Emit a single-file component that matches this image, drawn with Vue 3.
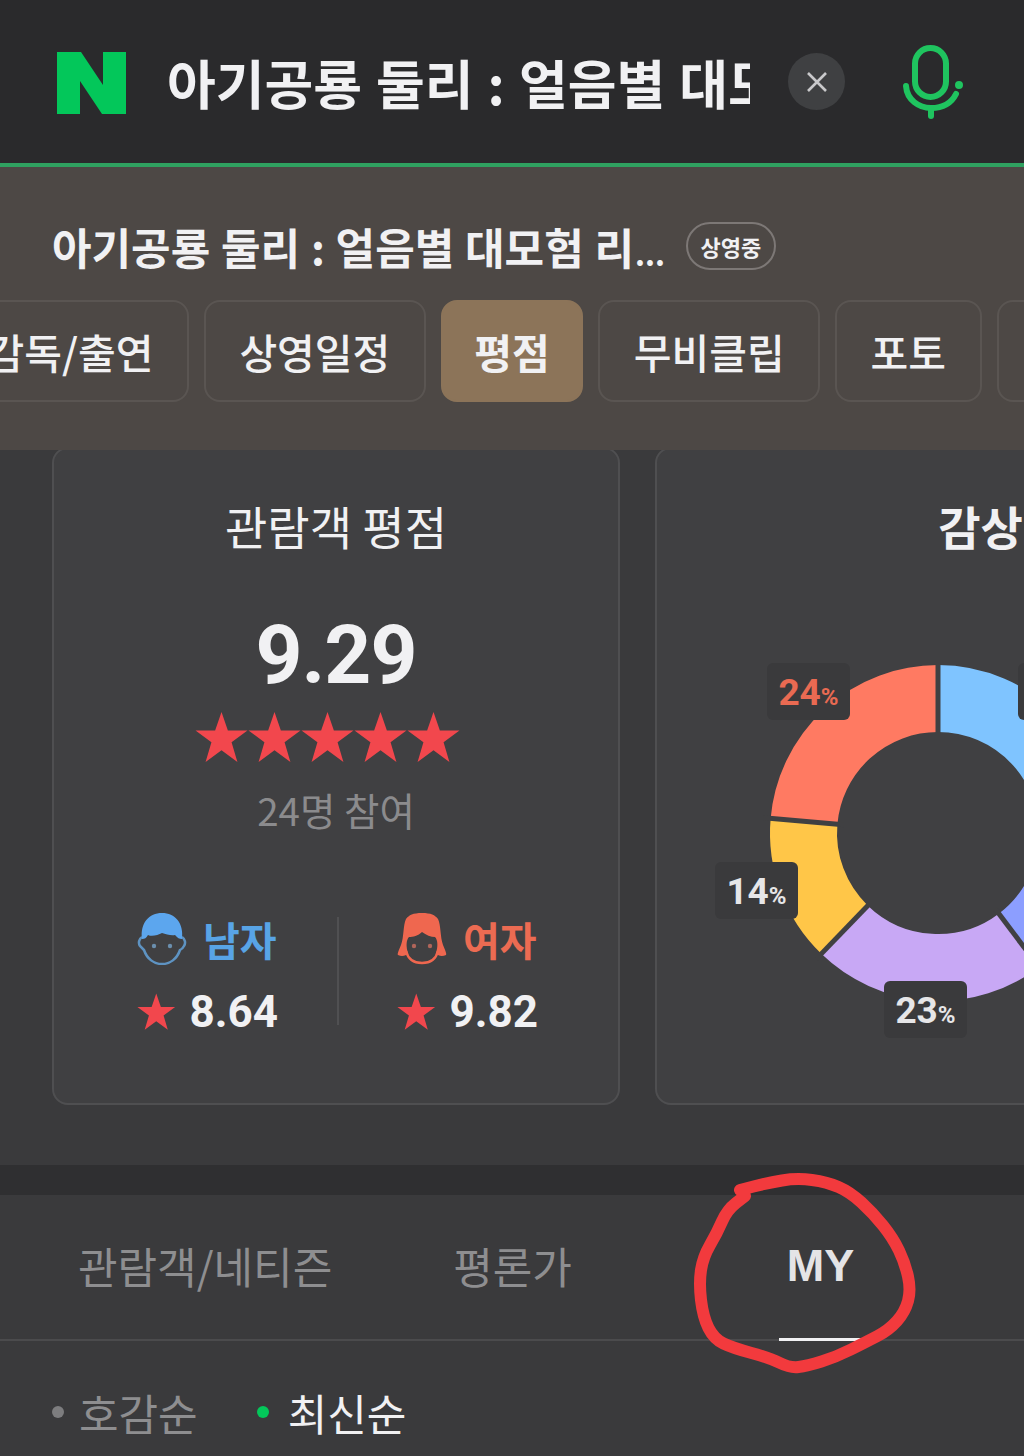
<script setup>
const chips = [
  { label: '감독/출연' },
  { label: '상영일정' },
  { label: '평점', active: true },
  { label: '무비클립' },
  { label: '포토' },
  { label: '리뷰' },
]

// 도넛 각 구간, 12시 방향부터 시계방향 (deg)
const cx = 200
const cy = 200
const r = 134.5
const segments = [
  { from: 0, to: 97, color: '#7fc4ff' },
  { from: 97, to: 143, color: '#8c9eff' },
  { from: 143, to: 224, color: '#c8a8f5' },
  { from: 224, to: 275, color: '#ffc648' },
  { from: 275, to: 360, color: '#ff7a62' },
]
const point = (deg, radius) => {
  const a = ((deg - 90) * Math.PI) / 180
  return [cx + radius * Math.cos(a), cy + radius * Math.sin(a)]
}
const arc = (s) => {
  const [x1, y1] = point(s.from, r)
  const [x2, y2] = point(s.to, r)
  return `M${x1} ${y1}A${r} ${r} 0 ${s.to - s.from > 180 ? 1 : 0} 1 ${x2} ${y2}`
}
const gapLine = (s) => {
  const [x1, y1] = point(s.from, 95)
  const [x2, y2] = point(s.from, 175)
  return `M${x1} ${y1}L${x2} ${y2}`
}

const labels = [
  { text: '24', cls: 'l24', red: true },
  { text: '14', cls: 'l14' },
  { text: '23', cls: 'l23' },
  { text: '27', cls: 'l27' },
]

// 빨간 손글씨 동그라미
const scribblePts = [
  [740, 1190], [767, 1183], [797, 1178], [827, 1182], [850, 1192], [873, 1213],
  [893, 1238], [905, 1263], [911, 1290], [905, 1312], [889, 1330], [866, 1342],
  [836, 1357], [807, 1366], [790, 1368], [770, 1358], [733, 1348], [714, 1339],
  [703, 1317], [699, 1283], [703, 1257], [717, 1233], [727, 1210], [745, 1196],
]
const scribble = scribblePts.reduce((d, p, i) => {
  if (i === 0) return `M${p[0]} ${p[1]}`
  const prev = scribblePts[i - 1]
  return `${d}Q${prev[0]} ${prev[1]} ${(prev[0] + p[0]) / 2} ${(prev[1] + p[1]) / 2}`
}, '') + 'L745 1196'

const starPath = 'M25 1l6 17.500h18.500L34.500 29.500 40 48 25 37 10 48l5.500-18.500L.5 18.500H19z'
</script>

<template>
  <div class="page">
    <header class="search">
      <svg class="logo" viewBox="0 0 69 62"><path d="M0 0H24L46 33V0H69V62H45L23 29V62H0Z" fill="#03c75a" /></svg>
      <div class="query">아기공룡 둘리 : 얼음별 대모험 리마스터링</div>
      <button class="clear">
        <svg viewBox="0 0 24 24" width="24" height="24"><path d="M3 3L21 21M21 3L3 21" stroke="#c9c9cb" stroke-width="2.600" /></svg>
      </button>
      <svg class="mic" viewBox="0 0 64 76" fill="none" stroke="#1fc45f" stroke-width="6" stroke-linecap="round">
        <rect x="14" y="4" width="31" height="49" rx="15.500" />
        <path d="M5 42C6 56 18 64 30 64C40 64 50 60 55 50" />
        <path d="M30 64V72" />
        <circle cx="58" cy="41" r="2" fill="#1fc45f" stroke-width="4" />
      </svg>
    </header>

    <section class="movie">
      <div class="movie-head">
        <h1>아기공룡 둘리 : 얼음별 대모험 리<span class="dots">...</span></h1>
        <span class="badge">상영중</span>
      </div>
      <nav class="chips">
        <a v-for="c in chips" :key="c.label" class="chip" :class="{ active: c.active }">{{ c.label }}</a>
      </nav>
    </section>

    <section class="cards">
      <div class="card score-card">
        <h2>관람객 평점</h2>
        <div class="score">9.29</div>
        <div class="stars">
          <svg v-for="n in 5" :key="n" viewBox="0 0 50 50" width="53" height="53"><path :d="starPath" fill="#f2474d" /></svg>
        </div>
        <div class="count">24명 참여</div>
        <div class="gender">
          <div class="col left">
            <div class="who male">
              <svg viewBox="0 0 50 52" width="50" height="52">
                <path d="M5 24C2 26 1 30 3 33C5 35 6 36 7 37C10 46 17 51 25 51C33 51 40 46 43 37C45 36 46 35 47 33C49 30 48 26 45 24" fill="none" stroke="#5e93c2" stroke-width="2.500" />
                <path d="M5 26C3 10 12 0 25 0C38 0 47 10 45 26C42 26 41 25 38 22C34 23 29 21 25 20C21 22 15 24 11 22C9 25 8 26 5 26Z" fill="#5ca6ee" />
                <circle cx="17" cy="33" r="2.200" fill="#6b8fae" />
                <circle cx="33" cy="33" r="2.200" fill="#6b8fae" />
              </svg>
              <span>남자</span>
            </div>
            <div class="rate">
              <svg viewBox="0 0 50 50" width="40" height="40"><path :d="starPath" fill="#f2474d" /></svg>
              <b>8.64</b>
            </div>
          </div>
          <i class="vline"></i>
          <div class="col right">
            <div class="who female">
              <svg viewBox="0 0 50 52" width="50" height="52">
                <path d="M9 38C11 46 17 50 25 50C33 50 39 46 41 38" fill="none" stroke="#ef674f" stroke-width="2.500" />
                <path d="M9 6C12 2 16 0 25 0C34 0 38 2 41 6C44 12 43 24 46 32C48 37 50 41 49 42C45 44 41 43 39 40C41 34 41 27 38 24C34 24 29 22 25 19C21 23 16 24 12 24C9 27 9 34 11 40C9 43 5 44 1 42C0 41 2 37 4 32C7 24 6 12 9 6Z" fill="#ef674f" />
                <circle cx="17" cy="33" r="2.200" fill="#b0655a" />
                <circle cx="33" cy="33" r="2.200" fill="#b0655a" />
              </svg>
              <span>여자</span>
            </div>
            <div class="rate">
              <svg viewBox="0 0 50 50" width="40" height="40"><path :d="starPath" fill="#f2474d" /></svg>
              <b>9.82</b>
            </div>
          </div>
        </div>
      </div>

      <div class="card point-card">
        <h2>감상포인트</h2>
        <div class="donut">
          <svg viewBox="0 0 400 400" width="400" height="400" fill="none">
            <path v-for="s in segments" :key="s.from" :d="arc(s)" :stroke="s.color" stroke-width="67" />
            <path v-for="s in segments" :key="'g' + s.from" :d="gapLine(s)" stroke="#404042" stroke-width="5" />
          </svg>
          <div v-for="l in labels" :key="l.cls" class="pct" :class="[l.cls, { red: l.red }]">{{ l.text }}<small>%</small></div>
        </div>
      </div>
    </section>

    <div class="band"></div>

    <section class="reviews">
      <div class="tabs">
        <a class="tab">관람객/네티즌</a>
        <a class="tab">평론가</a>
        <a class="tab on">MY</a>
      </div>
      <div class="sort">
        <span class="opt">호감순</span>
        <span class="opt sel">최신순</span>
      </div>
    </section>

    <svg class="scribble" viewBox="0 0 1024 1456" width="1024" height="1456" fill="none">
      <path :d="scribble" stroke="#f23a3d" stroke-width="12" stroke-linecap="round" stroke-linejoin="round" />
    </svg>
  </div>
</template>

<style scoped>
.page {
  position: relative;
  width: 1024px;
  height: 1456px;
  overflow: hidden;
  background: #3a3a3c;
  font-family: "Noto Sans CJK KR", "Noto Sans", sans-serif;
  color: #f1f1f3;
}
.search {
  height: 163px;
  box-sizing: border-box;
  padding: 0 0 0 57px;
  display: flex;
  align-items: center;
  background: #2a2a2c;
}
.logo {
  width: 69px;
  height: 62px;
  flex: none;
  margin-top: 2px;
}
.query {
  width: 583px;
  margin-left: 41px;
  flex: none;
  overflow: hidden;
  white-space: nowrap;
  font-size: 53px;
  line-height: 70px;
  font-weight: 700;
  word-spacing: 2px;
}
.clear {
  flex: none;
  width: 57px;
  height: 57px;
  margin-left: 38px;
  padding: 0;
  border: 0;
  border-radius: 50%;
  background: #3f4042;
  display: flex;
  align-items: center;
  justify-content: center;
}
.mic {
  flex: none;
  width: 64px;
  height: 76px;
  margin-left: 56px;
}
.movie {
  position: relative;
  z-index: 2;
  height: 287px;
  box-sizing: border-box;
  border-top: 4px solid #2fa160;
  padding-top: 52px;
  background: #4d4845;
}
.movie-head {
  display: flex;
  align-items: center;
  padding-left: 52px;
  height: 54px;
}
h1 {
  margin: 0;
  font-size: 43px;
  line-height: 54px;
  font-weight: 700;
  white-space: nowrap;
  word-spacing: 1px;
}
.dots {
  font-weight: 400;
  letter-spacing: -2px;
}
.badge {
  margin-left: 22px;
  width: 90px;
  height: 48px;
  box-sizing: border-box;
  border: 2px solid #7d7876;
  border-radius: 24px;
  font-size: 22px;
  line-height: 44px;
  font-weight: 700;
  text-align: center;
}
.chips {
  display: flex;
  gap: 15px;
  margin: 27px 0 0 -49px;
}
.chip {
  flex: none;
  height: 102px;
  box-sizing: border-box;
  padding: 0 33.500px;
  border: 2px solid #5a5552;
  border-radius: 16px;
  font-size: 41px;
  line-height: 98px;
  font-weight: 500;
  white-space: nowrap;
}
.chip.active {
  background: #8c7459;
  border-color: #8c7459;
  font-weight: 700;
  padding: 0 31.500px;
}
.cards {
  display: flex;
  gap: 35px;
  margin-top: -3px;
  padding: 0 0 60px 52px;
  background: #3a3a3c;
}
.card {
  flex: none;
  height: 658px;
  box-sizing: border-box;
  padding-top: 46px;
  border: 2px solid #4f4f51;
  border-radius: 16px;
  background: #404042;
  text-align: center;
}
.score-card {
  width: 568px;
}
.point-card {
  width: 778px;
}
h2 {
  margin: 0;
  font-size: 46px;
  line-height: 60px;
  font-weight: 400;
}
.point-card h2 {
  font-weight: 700;
}
.score {
  margin-top: 50px;
  font-family: Roboto, sans-serif;
  font-size: 82px;
  line-height: 100px;
  font-weight: 700;
  letter-spacing: -1px;
}
.stars {
  display: flex;
  justify-content: center;
  margin: 6px 18px 0 0;
}
.count {
  margin-top: 20px;
  font-size: 38.500px;
  line-height: 50px;
  color: #8b8b8d;
}
.gender {
  display: flex;
  justify-content: center;
  margin-top: 78px;
}
.col {
  display: flex;
  flex-direction: column;
  align-items: center;
  gap: 25px;
}
.left {
  width: 258px;
  padding-left: 3px;
}
.right {
  width: 258px;
}
.vline {
  width: 2px;
  height: 108px;
  margin-top: 5px;
  background: #505052;
}
.who,
.rate {
  width: 141px;
  display: flex;
  align-items: center;
  white-space: nowrap;
}
.who {
  height: 54px;
  gap: 16px;
  font-size: 40px;
  line-height: 54px;
  font-weight: 700;
}
.male {
  color: #58a4e6;
}
.female {
  color: #ec6b52;
}
.rate {
  height: 42px;
  gap: 14px;
}
.rate b {
  font-family: Roboto, sans-serif;
  font-size: 44px;
  line-height: 42px;
}
.donut {
  position: relative;
  width: 400px;
  height: 400px;
  margin: 78px 0 0 81px;
}
.pct {
  position: absolute;
  width: 83px;
  height: 57px;
  border-radius: 6px;
  background: #3a3a3c;
  font-family: Roboto, sans-serif;
  font-size: 37px;
  line-height: 59px;
  font-weight: 700;
  color: #e6e6e8;
  text-align: center;
}
.pct small {
  font-size: 24px;
}
.pct.red {
  color: #e96a52;
}
.l24 {
  left: 29px;
  top: 30px;
}
.l14 {
  left: -23px;
  top: 229px;
}
.l23 {
  left: 146px;
  top: 348px;
}
.l27 {
  left: 280px;
  top: 30px;
}
.band {
  height: 30px;
  background: #2f2f31;
}
.tabs {
  display: flex;
  height: 146px;
  box-sizing: border-box;
  padding-left: 78px;
  border-bottom: 2px solid #4b4b4d;
}
.tab {
  height: 146px;
  box-sizing: border-box;
  font-size: 43px;
  line-height: 140px;
  color: #8e8e90;
  white-space: nowrap;
}
.tab + .tab {
  margin-left: 121px;
}
.tab.on {
  margin-left: 207px;
  width: 83px;
  border-bottom: 3px solid #f1f1f3;
  font-family: "Liberation Sans", sans-serif;
  font-size: 45px;
  line-height: 142px;
  font-weight: 700;
  color: #e4e4e6;
  text-align: center;
}
.sort {
  display: flex;
  gap: 59px;
  padding: 39px 0 0 52px;
}
.opt {
  display: flex;
  align-items: center;
  gap: 15px;
  font-size: 43px;
  line-height: 64px;
  color: #8e8e90;
}
.opt::before {
  content: "";
  width: 12px;
  height: 12px;
  border-radius: 50%;
  background: #7d7d7f;
}
.opt.sel {
  gap: 19px;
  color: #f1f1f3;
}
.opt.sel::before {
  background: #03c75a;
}
.scribble {
  position: absolute;
  left: 0;
  top: 0;
  z-index: 3;
  pointer-events: none;
}
</style>

<style>
body {
  background: #3a3a3c;
}
</style>
